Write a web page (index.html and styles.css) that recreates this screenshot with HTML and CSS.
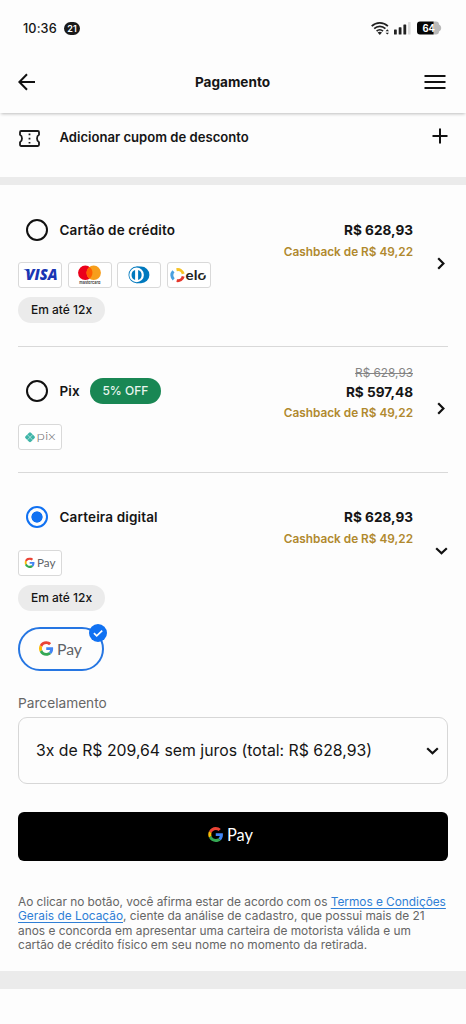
FILE: index.html
```html
<!DOCTYPE html>
<html lang="pt-BR">
<head>
<meta charset="utf-8">
<meta name="viewport" content="width=device-width, initial-scale=1">
<title>Pagamento</title>
<link rel="stylesheet" href="styles.css">
</head>
<body>
<svg class="defs" aria-hidden="true">
  <symbol id="google" viewBox="0 0 48 48">
    <path fill="#ea4335" d="M24 9.5c3.54 0 6.71 1.22 9.21 3.6l6.85-6.85C35.9 2.38 30.47 0 24 0 14.62 0 6.51 5.38 2.56 13.22l7.98 6.19C12.43 13.72 17.74 9.5 24 9.5z"/>
    <path fill="#4285f4" d="M46.98 24.55c0-1.57-.15-3.09-.38-4.55H24v9.02h12.94c-.58 2.96-2.26 5.48-4.78 7.18l7.73 6c4.51-4.18 7.09-10.36 7.09-17.65z"/>
    <path fill="#fbbc05" d="M10.53 28.59c-.48-1.45-.76-2.99-.76-4.59s.27-3.14.76-4.59l-7.98-6.19C.92 16.46 0 20.12 0 24c0 3.88.92 7.54 2.56 10.78l7.97-6.19z"/>
    <path fill="#34a853" d="M24 48c6.48 0 11.93-2.13 15.89-5.81l-7.73-6c-2.15 1.45-4.92 2.3-8.16 2.3-6.26 0-11.57-4.22-13.47-9.91l-7.98 6.19C6.51 42.62 14.62 48 24 48z"/>
  </symbol>
  <symbol id="chevron" viewBox="0 0 8 13">
    <path d="M1.2 1.2 6.4 6.5 1.2 11.8" fill="none" stroke="#111" stroke-width="2.2"/>
  </symbol>
  <symbol id="chevron-down" viewBox="0 0 13 8">
    <path d="M1.2 1.2 6.5 6.3 11.8 1.2" fill="none" stroke="#111" stroke-width="2.2"/>
  </symbol>
</svg>

<div class="status">
  <span class="clock">10:36</span><span class="count">21</span>
  <div class="indicators">
    <svg class="wifi" width="19" height="15" viewBox="0 0 19 15">
      <g fill="none" stroke="#222" stroke-width="1.7">
        <path d="M.7 5.2a11.5 11.5 0 0 1 16.2 0"/>
        <path d="M3.2 7.7a8 8 0 0 1 11.2 0"/>
        <path d="M5.6 10.1a4.6 4.6 0 0 1 6.4 0"/>
      </g>
      <path d="M6.6 11.6q2.2-1.6 4.4 0L8.8 14z" fill="#222"/>
      <path d="m16.3 8.3 1.7 1.9h-3.4zM16.3 13.6l1.7-1.9h-3.4z" fill="#222"/>
    </svg>
    <svg class="signal" width="17" height="14" viewBox="0 0 17 14">
      <g fill="#222"><rect x="0" y="8.5" width="2.8" height="5" rx=".6"/><rect x="4.7" y="6.2" width="2.8" height="7.3" rx=".6"/><rect x="9.4" y="3.5" width="2.8" height="10" rx=".6"/></g>
      <rect x="14" y="1" width="2.6" height="12.5" rx=".6" fill="#dcdcdc"/>
    </svg>
    <svg class="battery" width="25" height="14" viewBox="0 0 25 14">
      <path d="M16 .5h3a3 3 0 0 1 3 3c1.600.8 2.200 2 2.200 3.500s-.6 2.700-2.200 3.500a3 3 0 0 1-3 3h-3z" fill="#b9b9b9"/>
      <path d="M3 .5h13.500v13H3a3 3 0 0 1-3-3v-7a3 3 0 0 1 3-3z" fill="#050505"/>
      <text x="5.500" y="10.800" textLength="12.500" lengthAdjust="spacingAndGlyphs" class="battery-level">64</text>
    </svg>
  </div>
</div>

<header class="topbar">
  <svg width="18" height="18" viewBox="0 0 18 18"><path d="M17 9H1.600M9 1.300 1.400 9 9 16.700" fill="none" stroke="#111" stroke-width="2"/></svg>
  <h1>Pagamento</h1>
  <svg width="22" height="16" viewBox="0 0 22 16"><path d="M.5 2h21M.5 8h21M.5 14h21" stroke="#111" stroke-width="2"/></svg>
</header>

<div class="coupon">
  <svg width="21" height="17" viewBox="0 0 21 17">
    <path d="M2.200 1h16.600q1.200 0 1.200 1.200v2.600q-2 1-2 3.700t2 3.700v2.600q0 1.200-1.200 1.200H2.200Q1 16 1 14.800v-2.600q2-1 2-3.700T1 4.800V2.200Q1 1 2.200 1z" fill="none" stroke="#1a1a1a" stroke-width="1.800"/>
    <path d="M10.500 3.500v10.500" stroke="#1a1a1a" stroke-width="1.800" stroke-dasharray="1.700 2.500"/>
  </svg>
  <span class="title">Adicionar cupom de desconto</span>
  <svg class="plus" width="16" height="16" viewBox="0 0 16 16"><path d="M8 .5v15M.5 8h15" stroke="#111" stroke-width="2"/></svg>
</div>

<main>
  <section class="option credit">
    <div class="method">
      <div class="choice"><i class="radio"></i><span class="title">Cartão de crédito</span></div>
      <div class="brands">
        <div class="brand"><svg width="42" height="24" viewBox="0 0 42 24"><text class="visa" x="6.500" y="17.200" textLength="32" lengthAdjust="spacingAndGlyphs">VISA</text><path d="M4.300 6.200h5.200l1.500 5.500Q8.500 7.300 4.300 6.200z" fill="#1a36b4"/></svg></div>
        <div class="brand"><svg width="42" height="24" viewBox="0 0 42 24"><circle cx="16.300" cy="9.800" r="7.200" fill="#eb001b"/><circle cx="24.700" cy="9.800" r="7.200" fill="#f79e1b"/><path d="M20.500 4a7.200 7.200 0 0 1 0 11.600 7.200 7.200 0 0 1 0-11.600z" fill="#ff5f00"/><text class="mastercard" x="10.300" y="21" textLength="21" lengthAdjust="spacingAndGlyphs">mastercard</text></svg></div>
        <div class="brand"><svg width="42" height="24" viewBox="0 0 42 24"><path d="M18.500 3.500h4.500a8.400 8.400 0 0 1 0 16.800h-4.500z" fill="#0079be"/><circle cx="18.800" cy="11.900" r="8.300" fill="#0079be"/><circle cx="18.600" cy="11.900" r="7.300" fill="#fff"/><path d="M17.100 6.900a5.300 5.300 0 0 0 0 10zM20.100 6.900a5.300 5.300 0 0 1 0 10z" fill="#0079be"/></svg></div>
        <div class="brand"><svg width="42" height="24" viewBox="0 0 42 24">
          <g fill="none" stroke-width="3"><path d="M8.500 6.700a5.600 5.600 0 0 1 6.700 4.200" stroke="#f7c325"/><path d="M5.700 16.300a5.600 5.600 0 0 1-.3-8.100" stroke="#4aa0df"/><path d="M15.200 13.400a5.600 5.600 0 0 1-6.500 4.200" stroke="#e5372b"/></g>
          <text class="elo" x="17.600" y="16.700" textLength="20.500" lengthAdjust="spacingAndGlyphs">elo</text><path d="m34.500 12.700 5-2.500" stroke="#fff" stroke-width="1.500"/></svg></div>
      </div>
      <span class="pill">Em até 12x</span>
    </div>
    <div class="amount"><strong>R$ 628,93</strong><em>Cashback de R$ 49,22</em></div>
    <svg class="go" width="8" height="13"><use href="#chevron"/></svg>
  </section>

  <section class="option pix">
    <div class="method">
      <div class="choice"><i class="radio"></i><span class="title">Pix</span><span class="off">5% OFF</span></div>
      <div class="brands">
        <div class="brand"><svg width="42" height="24" viewBox="0 0 42 24">
          <path d="M11 8.800 14.500 12.300 11 15.800 7.500 12.300z" fill="#3fb5a8" stroke="#3fb5a8" stroke-width="2.800" stroke-linejoin="round"/><path d="m8.200 9.500 5.600 5.600M13.800 9.500l-5.600 5.600" stroke="#c4e7e3" stroke-width=".8"/>
          <text class="pix-name" x="17.500" y="14.700" textLength="19" lengthAdjust="spacingAndGlyphs">pix</text></svg></div>
      </div>
    </div>
    <div class="amount"><s>R$ 628,93</s><strong>R$ 597,48</strong><em>Cashback de R$ 49,22</em></div>
    <svg class="go" width="8" height="13"><use href="#chevron"/></svg>
  </section>

  <section class="option wallet">
    <div class="method">
      <div class="choice"><i class="radio checked"></i><span class="title">Carteira digital</span></div>
      <div class="brands">
        <div class="brand"><svg width="42" height="24" viewBox="0 0 42 24"><use href="#google" x="5.500" y="6.500" width="10.300" height="10.500"/><text class="gpay small" x="18" y="15.800" textLength="18.500" lengthAdjust="spacingAndGlyphs">Pay</text></svg></div>
      </div>
      <span class="pill">Em até 12x</span>
    </div>
    <div class="amount"><strong>R$ 628,93</strong><em>Cashback de R$ 49,22</em></div>
    <svg class="go down" width="13" height="8"><use href="#chevron-down"/></svg>
  </section>

  <div class="wallet-choice">
    <svg width="46" height="24" viewBox="0 0 46 24"><use href="#google" x="1" y="4" width="14.500" height="15"/><text class="gpay" x="19" y="17.500" textLength="25" lengthAdjust="spacingAndGlyphs">Pay</text></svg>
    <svg class="check" width="18" height="18" viewBox="0 0 18 18"><circle cx="9" cy="9" r="9" fill="#1071f2"/><path d="m4.900 9.200 2.800 2.700 5.500-5.300" fill="none" stroke="#fff" stroke-width="1.700"/></svg>
  </div>

  <label class="field-label">Parcelamento</label>
  <div class="select"><span>3x de R$ 209,64 sem juros (total: R$ 628,93)</span><svg width="13" height="8"><use href="#chevron-down"/></svg></div>

  <div class="pay" role="button">
    <svg width="46" height="24" viewBox="0 0 46 24"><use href="#google" x="0" y="4" width="15.500" height="15"/><text class="gpay white" x="19" y="17.800" textLength="26" lengthAdjust="spacingAndGlyphs">Pay</text></svg>
  </div>

  <p class="legal"><span>Ao clicar no botão, você afirma estar de acordo com os <a>Termos e Condições</a></span><br><a>Gerais de Locação</a>, ciente da análise de cadastro, que possui mais de 21<br>anos e concorda em apresentar uma carteira de motorista válida e um<br>cartão de crédito físico em seu nome no momento da retirada.</p>
</main>
<div class="band"></div>
</body>
</html>
```
FILE: styles.css
```css
* { box-sizing: border-box; }
body { margin: 0; width: 466px; height: 1024px; overflow: hidden; background: #fdfdfd; color: #151515; font-family: Inter, "Liberation Sans", sans-serif; }
svg { display: block; flex: none; }
.defs { width: 0; height: 0; position: absolute; }

.status { height: 56px; padding: 0 24px 0 23px; display: flex; align-items: center; }
.clock { font-size: 12.700px; font-weight: 500; letter-spacing: .1px; width: 41px; white-space: nowrap; }
.count { width: 16px; height: 13px; border-radius: 7px; background: #1a1a1a; color: #fff; font-size: 9px; font-weight: 600; line-height: 13px; text-align: center; }
.indicators { margin-left: auto; display: flex; align-items: center; }
.signal { margin: 0 6px 0 4px; }
.battery-level { font: 700 10px Inter, sans-serif; fill: #fff; }

.topbar { height: 57px; padding: 0 20px 5px 18px; display: flex; align-items: center; justify-content: space-between; box-shadow: 0 2px 3px -1px rgba(0,0,0,.25); }
.topbar h1 { margin: 0 0 0 5px; font-size: 13.600px; font-weight: 700; }
.coupon { height: 72px; border-bottom: 8px solid #ebebeb; padding: 15px 18px 0 19px; display: flex; align-items: flex-start; }
.coupon > svg:first-child { margin: 2px 19.500px 0 0; }
.coupon .title { line-height: 18px; font-size: 13.100px; letter-spacing: 0; }
.plus { margin-left: auto; }
.title { font-size: 13.500px; font-weight: 600; letter-spacing: .15px; white-space: nowrap; }

main { padding: 0 18px; }
.option { display: flex; align-items: flex-start; border-bottom: 1px solid #d9d9d9; }
.credit { height: 162px; padding-top: 34px; }
.pix { height: 126px; padding-top: 33px; }
.wallet { height: 154px; padding-top: 33px; border: 0; }
.choice { height: 22px; padding-left: 8px; display: flex; align-items: center; }
.radio { width: 22px; height: 22px; border: 2px solid #111; border-radius: 50%; margin-right: 11.500px; flex: none; }
.radio.checked { border-color: #1071f2; background: radial-gradient(circle, #1071f2 5.300px, transparent 5.900px); }
.off { margin-left: 10px; width: 71px; height: 26px; border-radius: 13px; background: #198754; color: #e8f5ee; font-size: 12px; font-weight: 500; line-height: 26px; text-align: center; }
.brands { display: flex; gap: 5.500px; margin-top: 21px; }
.pix .brands { margin-top: 22px; }
.wallet .brands { margin-top: 22px; }
.brand { width: 44px; height: 26px; border: 1px solid #d9d9d9; border-radius: 3px; background: #fff; }
.pill { display: block; width: 87px; height: 26px; border-radius: 13px; margin-top: 9px; background: #ebebeb; font-size: 12px; font-weight: 500; line-height: 26px; text-align: center; }
.amount { margin-left: auto; display: flex; flex-direction: column; text-align: right; line-height: 22px; white-space: nowrap; }
.amount strong { font-size: 13.600px; font-weight: 700; }
.amount em { font-size: 11.800px; font-weight: 600; font-style: normal; color: #b0892e; }
.amount s { font-size: 11.800px; color: #858585; line-height: 18px; margin-top: -16px; }
.pix .amount strong { line-height: 20px; }
.go { margin: 38px 3px 0 24px; }
.pix .go { margin-top: 22px; }
.go.down { margin: 41px 0 0 22px; }

.visa { font: italic 800 15px "Open Sans", sans-serif; fill: #1a36b4; }
.mastercard { font: 600 4px Inter, sans-serif; fill: #333; }
.elo { font: 700 14px Lato, sans-serif; fill: #222; }
.pix-name { font: 300 12px Lato, sans-serif; fill: #707070; }
.gpay { font: 400 15.500px Lato, sans-serif; fill: #5f6368; }
.gpay.small { font-size: 11.500px; }
.gpay.white { font-size: 16.500px; fill: #fff; }

.wallet-choice { position: relative; width: 86px; height: 44px; border: 2px solid #2676e2; border-radius: 22px; display: flex; align-items: center; justify-content: center; padding-bottom: 1px; }
.check { position: absolute; top: -5px; right: -5px; }
.field-label { display: block; margin-top: 23px; font-size: 13.700px; line-height: 18px; color: #666; }
.select { margin-top: 5px; height: 67px; border: 1px solid #d7d7d7; border-radius: 9px; padding: 0 8px 0 17px; display: flex; align-items: center; justify-content: space-between; font-size: 15.800px; white-space: nowrap; }
.pay { margin-top: 28px; height: 49px; border-radius: 6px; background: #000; display: flex; align-items: center; justify-content: center; padding: 0 4px 3px 0; }
.legal { margin: 34px 0 0; font-size: 11.880px; line-height: 14.400px; color: #666; white-space: nowrap; }
.legal span { letter-spacing: -.035px; }
.legal a { color: #2f7fd6; text-decoration: underline; text-underline-offset: 2px; }
.band { margin-top: 18px; height: 18px; background: #ebebeb; }
```
